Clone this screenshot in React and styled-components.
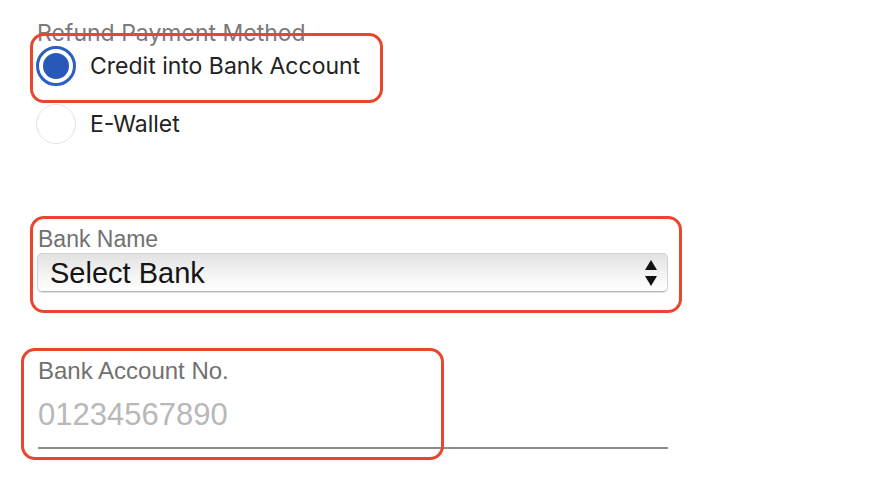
import React, { useState } from "react";
import styled, { createGlobalStyle } from "styled-components";

const GlobalStyle = createGlobalStyle`
  html, body {
    margin: 0;
    padding: 0;
    background: #ffffff;
  }
  body {
    font-family: "Liberation Sans", Arial, sans-serif;
  }
`;

const Page = styled.div`
  width: 870px;
  height: 484px;
  box-sizing: border-box;
  padding: 20px 0 0 37px;
  overflow: hidden;
  display: flex;
  flex-direction: column;
  align-items: flex-start;
`;

const MethodGroup = styled.div`
  display: flex;
  flex-direction: column;
  align-items: flex-start;
  font-family: Inter, "Noto Sans", sans-serif;
`;

const Legend = styled.div`
  font-size: 23px;
  line-height: 26px;
  color: #7a7a7a;
`;

const RadioList = styled.div`
  display: flex;
  flex-direction: column;
  align-items: flex-start;
  gap: 18px;
`;

// the red annotation frames lie over the form, so they are absolute
const Marked = styled.div`
  position: relative;
  display: inline-flex;
  flex-direction: column;
`;

const Highlight = styled.span`
  position: absolute;
  top: ${(p) => p.t}px;
  right: ${(p) => p.r}px;
  bottom: ${(p) => p.b}px;
  left: ${(p) => p.l}px;
  border: 3px solid #e9472d;
  border-radius: 14px;
  pointer-events: none;
`;

const RadioRow = styled.label`
  display: inline-flex;
  align-items: center;
  gap: 14px;
  height: 40px;
  margin-left: -1px;
  cursor: pointer;
`;

const RadioCircle = styled.span`
  box-sizing: border-box;
  width: 40px;
  height: 40px;
  border-radius: 50%;
  flex-shrink: 0;
  display: flex;
  align-items: center;
  justify-content: center;
  background: #ffffff;
  border: ${(p) => (p.checked ? "3px solid #2d5ec2" : "1px solid #e3e3e3")};

  &::after {
    content: "";
    width: 26px;
    height: 26px;
    border-radius: 50%;
    background: ${(p) => (p.checked ? "#2a58b8" : "transparent")};
  }
`;

const RadioText = styled.span`
  font-size: 23px;
  line-height: 26px;
  color: #222222;
`;

const Field = styled.div`
  display: flex;
  flex-direction: column;
  width: 631px;
`;

const FieldLabel = styled.div`
  font-size: ${(p) => p.size}px;
  line-height: 27px;
  color: #717171;
  padding-left: 1px;
`;

const SelectBox = styled.div`
  box-sizing: border-box;
  height: 39px;
  display: flex;
  align-items: center;
  justify-content: space-between;
  padding: 0 9px 0 12px;
  border-radius: 5px;
  border: 1px solid #d2d2d2;
  border-bottom-color: #b4b4b4;
  background: linear-gradient(to bottom, #e2e2e2 0%, #f4f4f4 55%, #ffffff 100%);
  box-shadow: 0 1px 1px rgba(0, 0, 0, 0.12);
  cursor: pointer;
`;

const SelectText = styled.span`
  font-size: 29px;
  line-height: 34px;
  color: #151515;
`;

const TextInput = styled.input`
  box-sizing: border-box;
  width: 630px;
  height: 65px;
  margin-left: 1px;
  padding: 0 0 1px 0;
  border: none;
  border-bottom: 2px solid #8c8c8c;
  outline: none;
  font-family: "Liberation Sans", Arial, sans-serif;
  font-size: 31px;
  color: #222;
  background: transparent;

  &::placeholder {
    color: #b8b8b8;
  }
`;

const Spacer = styled.div`
  height: ${(p) => p.h}px;
  flex-shrink: 0;
`;

function Arrows() {
  return (
    <svg width="14" height="28" viewBox="0 0 14 28">
      <path d="M7 1 L13 11 L1 11 Z" fill="#111" />
      <path d="M1 17 L13 17 L7 27 Z" fill="#111" />
    </svg>
  );
}

export default function App() {
  const [method, setMethod] = useState("bank");
  const [account, setAccount] = useState("");

  return (
    <Page>
      <GlobalStyle />
      <MethodGroup>
        <Legend>Refund Payment Method</Legend>
        <RadioList>
          <Marked>
            <RadioRow onClick={() => setMethod("bank")}>
              <RadioCircle checked={method === "bank"} />
              <RadioText>Credit into Bank Account</RadioText>
            </RadioRow>
            <Highlight t={-13} r={-23} b={-17} l={-7} />
          </Marked>
          <RadioRow onClick={() => setMethod("wallet")}>
            <RadioCircle checked={method === "wallet"} />
            <RadioText>E-Wallet</RadioText>
          </RadioRow>
        </RadioList>
      </MethodGroup>

      <Spacer h={82} />

      <Marked>
        <Field>
          <FieldLabel size={23}>Bank Name</FieldLabel>
          <SelectBox>
            <SelectText>Select Bank</SelectText>
            <Arrows />
          </SelectBox>
        </Field>
        <Highlight t={-10} r={-14} b={-21} l={-7} />
      </Marked>

      <Spacer h={65} />

      <Marked>
        <Field>
          <FieldLabel size={24}>Bank Account No.</FieldLabel>
          <TextInput
            value={account}
            onChange={(e) => setAccount(e.target.value)}
            placeholder="01234567890"
          />
        </Field>
        <Highlight t={-9} r={224} b={-11} l={-16} />
      </Marked>
    </Page>
  );
}
